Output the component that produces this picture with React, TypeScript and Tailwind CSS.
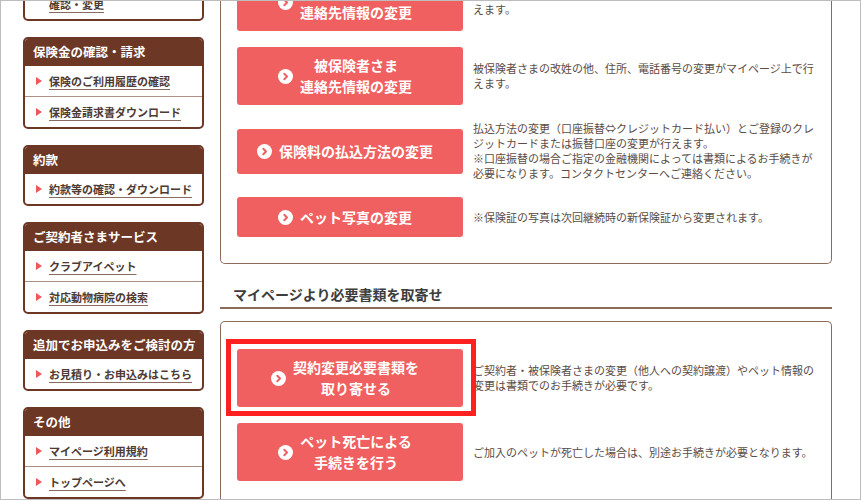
import React from 'react';

type SideItem = { label: React.ReactNode };

const sideBoxes: { title: string; items: SideItem[] }[] = [
  { title: 'ご契約内容', items: [{ label: <>ご契約者さま情報の<br />確認・変更</> }] },
  {
    title: '保険金の確認・請求',
    items: [{ label: '保険のご利用履歴の確認' }, { label: '保険金請求書ダウンロード' }],
  },
  { title: '約款', items: [{ label: '約款等の確認・ダウンロード' }] },
  {
    title: 'ご契約者さまサービス',
    items: [{ label: 'クラブアイペット' }, { label: '対応動物病院の検索' }],
  },
  { title: '追加でお申込みをご検討の方', items: [{ label: 'お見積り・お申込みはこちら' }] },
  { title: 'その他', items: [{ label: 'マイページ利用規約' }, { label: 'トップページへ' }] },
];

function SideBox({ title, items }: { title: string; items: SideItem[] }) {
  return (
    <div className="overflow-hidden rounded-[5px] border-2 border-[#6d3725] bg-white">
      <div className="flex h-[27px] items-center bg-[#6d3725] pl-[8px] text-[12.5px] font-bold text-white">
        {title}
      </div>
      {items.map((it, i) => (
        <div
          key={i}
          className={`flex items-start gap-[7px] py-[7.5px] pl-[11px] text-[11px] leading-[15px] ${
            i > 0 ? 'border-t border-[#ad9085]' : ''
          }`}
        >
          <svg width="6" height="8" viewBox="0 0 6 8" className="mt-[3.5px] shrink-0">
            <path d="M0 0 L6 4 L0 8 Z" fill="#ef5858" />
          </svg>
          <a className="font-bold text-[#4d3a33] underline decoration-[#8a6b60] underline-offset-[3px]">
            {it.label}
          </a>
        </div>
      ))}
    </div>
  );
}

function ChevronIcon() {
  return (
    <svg width="15" height="15" viewBox="0 0 15 15" className="shrink-0">
      <circle cx="7.5" cy="7.5" r="7.5" fill="#fff" />
      <path d="M6.3 4.8 L9 7.5 L6.3 10.2" fill="none" stroke="#f06060" strokeWidth="2" strokeLinecap="round" strokeLinejoin="round" />
    </svg>
  );
}

function Row({ label, desc, h }: { label: React.ReactNode; desc: React.ReactNode; h: string }) {
  return (
    <div className="flex items-center gap-[10px]">
      <button
        className={`flex w-[226px] shrink-0 items-center justify-center gap-[7px] rounded-[3px] bg-[#f06060] pr-[10px] text-center text-[14px] font-bold leading-[21px] text-white ${h}`}
      >
        <ChevronIcon />
        <span>{label}</span>
      </button>
      <p className="whitespace-nowrap text-[11px] leading-[15px] text-[#5b4b45]">{desc}</p>
    </div>
  );
}

export default function App() {
  return (
    <div className="h-[500px] w-[861px] overflow-hidden border border-[#bdbdbd] bg-white font-['Noto_Sans_CJK_JP','Noto_Sans',sans-serif]">
      <div className="flex items-start gap-4 pl-[22px]">
        <aside className="mt-[-56px] flex w-[181px] shrink-0 flex-col gap-4">
          {sideBoxes.map(b => (
            <SideBox key={b.title} title={b.title} items={b.items} />
          ))}
        </aside>

        <main className="mt-[-28px] flex w-[612px] shrink-0 flex-col">
          <div className="flex flex-col gap-4 rounded-b-[5px] border-x border-b border-[#8d6b5b] px-4 pb-[26px]">
            <Row
              h="h-[58px]"
              label={<>ご契約者さま<br />連絡先情報の変更</>}
              desc={<>ご契約者さまの改姓の他、住所、電話番号の変更がマイページ上で行<br />えます。</>}
            />
            <Row
              h="h-[58px]"
              label={<>被保険者さま<br />連絡先情報の変更</>}
              desc={<>被保険者さまの改姓の他、住所、電話番号の変更がマイページ上で行<br />えます。</>}
            />
            <Row
              h="h-[45px]"
              label="保険料の払込方法の変更"
              desc={
                <>
                  払込方法の変更（口座振替⇔クレジットカード払い）とご登録のクレ<br />
                  ジットカードまたは振替口座の変更が行えます。<br />
                  ※口座振替の場合ご指定の金融機関によっては書類によるお手続きが<br />
                  必要になります。コンタクトセンターへご連絡ください。
                </>
              }
            />
            <Row h="h-[40px]" label="ペット写真の変更" desc="※保険証の写真は次回継続時の新保険証から変更されます。" />
          </div>

          <h2 className="mt-[20px] border-b-2 border-[#8d6b5b] pb-[3px] pl-[13px] text-[14px] font-bold leading-[20px] text-[#3d3d3d]">
            マイページより必要書類を取寄せ
          </h2>

          <div className="mt-[12px] flex flex-col gap-4 rounded-t-[5px] border-x border-t border-[#8d6b5b] px-4 pb-[26px] pt-[27px]">
            <div className="relative">
              <Row
                h="h-[58px]"
                label={<>契約変更必要書類を<br />取り寄せる</>}
                desc={<>ご契約者・被保険者さまの変更（他人への契約譲渡）やペット情報の<br />変更は書類でのお手続きが必要です。</>}
              />
              <div className="pointer-events-none absolute -left-[11px] -top-[10px] z-10 h-[77px] w-[250px] border-[5px] border-[#ff2020]" />
            </div>
            <Row
              h="h-[58px]"
              label={<>ペット死亡による<br />手続きを行う</>}
              desc="ご加入のペットが死亡した場合は、別途お手続きが必要となります。"
            />
          </div>
        </main>
      </div>
    </div>
  );
}
